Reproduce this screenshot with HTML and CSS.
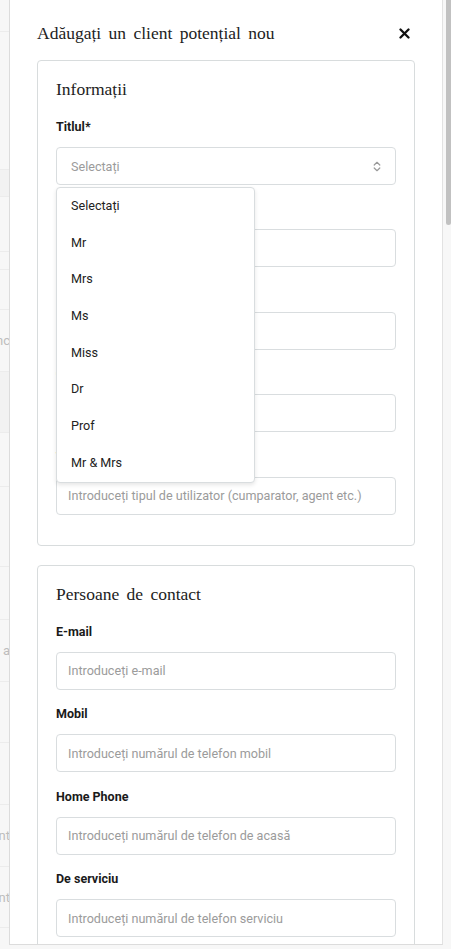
FILE: index.html
```html
<!DOCTYPE html>
<html lang="ro">
<head>
<meta charset="utf-8">
<link rel="stylesheet" href="styles.css">
</head>
<body>
<div class="backdrop">
  <div class="row" style="height:32px"></div>
  <div class="row" style="height:138px"></div>
  <div class="row shade" style="height:27px"></div>
  <div class="row" style="height:55px"></div>
  <div class="row" style="height:18px"></div>
  <div class="row" style="height:40px"></div>
  <div class="row" style="height:62px"><span class="frag">nc</span></div>
  <div class="row shade" style="height:61px"></div>
  <div class="row" style="height:54px"></div>
  <div class="row" style="height:80px"></div>
  <div class="row" style="height:53px"></div>
  <div class="row" style="height:62px"><span class="frag">a</span></div>
  <div class="row" style="height:61px"></div>
  <div class="row" style="height:62px"></div>
  <div class="row" style="height:62px"><span class="frag">nt</span></div>
  <div class="row" style="height:61px"><span class="frag">nt</span></div>
  <div class="row" style="height:40px"></div>
</div>

<div class="panel">
  <div class="panel-head">
    <h2 class="panel-title">Adăugați un client potențial nou</h2>
    <button class="close" aria-label="Închide">
      <svg width="11" height="11" viewBox="0 0 11 11"><path d="M1.5 1.5 L9.5 9.5 M9.5 1.5 L1.5 9.5" stroke="#111" stroke-width="2.3" stroke-linecap="round"/></svg>
    </button>
  </div>

  <section class="card">
    <h3 class="card-title">Informații</h3>
    <div class="group select-group">
      <label class="label">Titlul*</label>
      <div class="select">
        <span class="select-value">Selectați</span>
        <svg class="chev" width="8" height="11" viewBox="0 0 8 11"><path d="M1.2 4 L4 1.3 L6.8 4 M1.2 7 L4 9.7 L6.8 7" fill="none" stroke="#9a9a9a" stroke-width="1.2" stroke-linecap="round" stroke-linejoin="round"/></svg>
      </div>
      <ul class="dropdown">
        <li>Selectați</li>
        <li>Mr</li>
        <li>Mrs</li>
        <li>Ms</li>
        <li>Miss</li>
        <li>Dr</li>
        <li>Prof</li>
        <li>Mr &amp; Mrs</li>
      </ul>
    </div>
    <div class="group">
      <label class="label">Prenume*</label>
      <div class="input"></div>
    </div>
    <div class="group">
      <label class="label">Nume*</label>
      <div class="input"></div>
    </div>
    <div class="group">
      <label class="label">Companie</label>
      <div class="input"></div>
    </div>
    <div class="group">
      <label class="label">Tip</label>
      <div class="input"><span class="ph">Introduceți tipul de utilizator (cumparator, agent etc.)</span></div>
    </div>
  </section>

  <section class="card">
    <h3 class="card-title">Persoane de contact</h3>
    <div class="group">
      <label class="label">E-mail</label>
      <div class="input"><span class="ph">Introduceți e-mail</span></div>
    </div>
    <div class="group">
      <label class="label">Mobil</label>
      <div class="input"><span class="ph">Introduceți numărul de telefon mobil</span></div>
    </div>
    <div class="group">
      <label class="label">Home Phone</label>
      <div class="input"><span class="ph">Introduceți numărul de telefon de acasă</span></div>
    </div>
    <div class="group">
      <label class="label">De serviciu</label>
      <div class="input"><span class="ph">Introduceți numărul de telefon serviciu</span></div>
    </div>
  </section>
</div>

<div class="scrolltrack"><div class="thumb"></div></div>
</body>
</html>
```

FILE: styles.css
```css
* { box-sizing: border-box; }
html, body { margin: 0; padding: 0; }
body {
  width: 451px;
  height: 949px;
  overflow: hidden;
  background: #f7f7f7;
  position: relative;
  font-family: Roboto, "Liberation Sans", sans-serif;
}

.backdrop {
  display: flex;
  flex-direction: column;
  width: 20px;
}
.row {
  border-bottom: 1px solid #ececec;
  display: flex;
  align-items: center;
  justify-content: flex-end;
  overflow: hidden;
}
.row.shade { background: #f2f2f2; }
.frag {
  color: #bdbdbd;
  font-size: 13px;
  margin-right: 10px;
}

.panel {
  position: absolute;
  left: 9px;
  top: 0;
  width: 434px;
  height: 945px;
  background: #fff;
  border-left: 1px solid #dcdcdc;
  border-right: 1px solid #e2e2e2;
  border-bottom: 1px solid #dcdcdc;
  padding: 20px 27px 0 27px;
  overflow: hidden;
}

.panel-head {
  display: flex;
  align-items: center;
  justify-content: space-between;
  height: 26px;
  margin-bottom: 14px;
}
.panel-title {
  margin: 0;
  font-family: "Liberation Serif", "DejaVu Serif", serif;
  font-weight: 400;
  font-size: 17.5px;
  word-spacing: 3px;
  color: #222;
  line-height: 26px;
}
.close {
  border: 0;
  background: none;
  padding: 0;
  margin-right: 5px;
  width: 11px;
  height: 11px;
  display: flex;
}

.card {
  border: 1px solid #d8dcdd;
  border-radius: 4px;
  padding: 16px 18px 16px 18px;
  margin-bottom: 19px;
}
.card-title {
  margin: 0 0 16px;
  font-family: "Liberation Serif", "DejaVu Serif", serif;
  font-weight: 400;
  font-size: 17.5px;
  word-spacing: 3px;
  line-height: 24px;
  color: #222;
}

.group {
  margin-bottom: 14.4px;
}
.select-group { position: relative; }
.label {
  display: block;
  font-size: 12.5px;
  font-weight: 700;
  line-height: 20px;
  margin-bottom: 10px;
  color: #1a1a1a;
}
.input, .select {
  height: 38px;
  border: 1px solid #d9dddf;
  border-radius: 4px;
  display: flex;
  align-items: center;
  padding: 0 11px;
}
.select { padding: 0 14px 0 14px; justify-content: space-between; }
.ph, .select-value {
  font-size: 12.6px;
  color: #9b9b9b;
}

.dropdown {
  position: absolute;
  left: 0;
  top: 70px;
  width: 199px;
  margin: 0;
  padding: 0;
  list-style: none;
  background: #fff;
  border: 1px solid #d9dddf;
  border-radius: 4px;
  box-shadow: 0 2px 4px rgba(0,0,0,0.10);
  z-index: 5;
}
.dropdown li {
  height: 36.7px;
  line-height: 36.7px;
  padding-left: 14px;
  font-size: 12.6px;
  color: #222;
}

.scrolltrack {
  position: absolute;
  right: 0;
  top: 0;
  width: 5px;
  height: 944px;
}
.thumb {
  width: 5px;
  height: 225px;
  background: #c1c1c1;
  border-radius: 0 0 3px 3px;
}
```
